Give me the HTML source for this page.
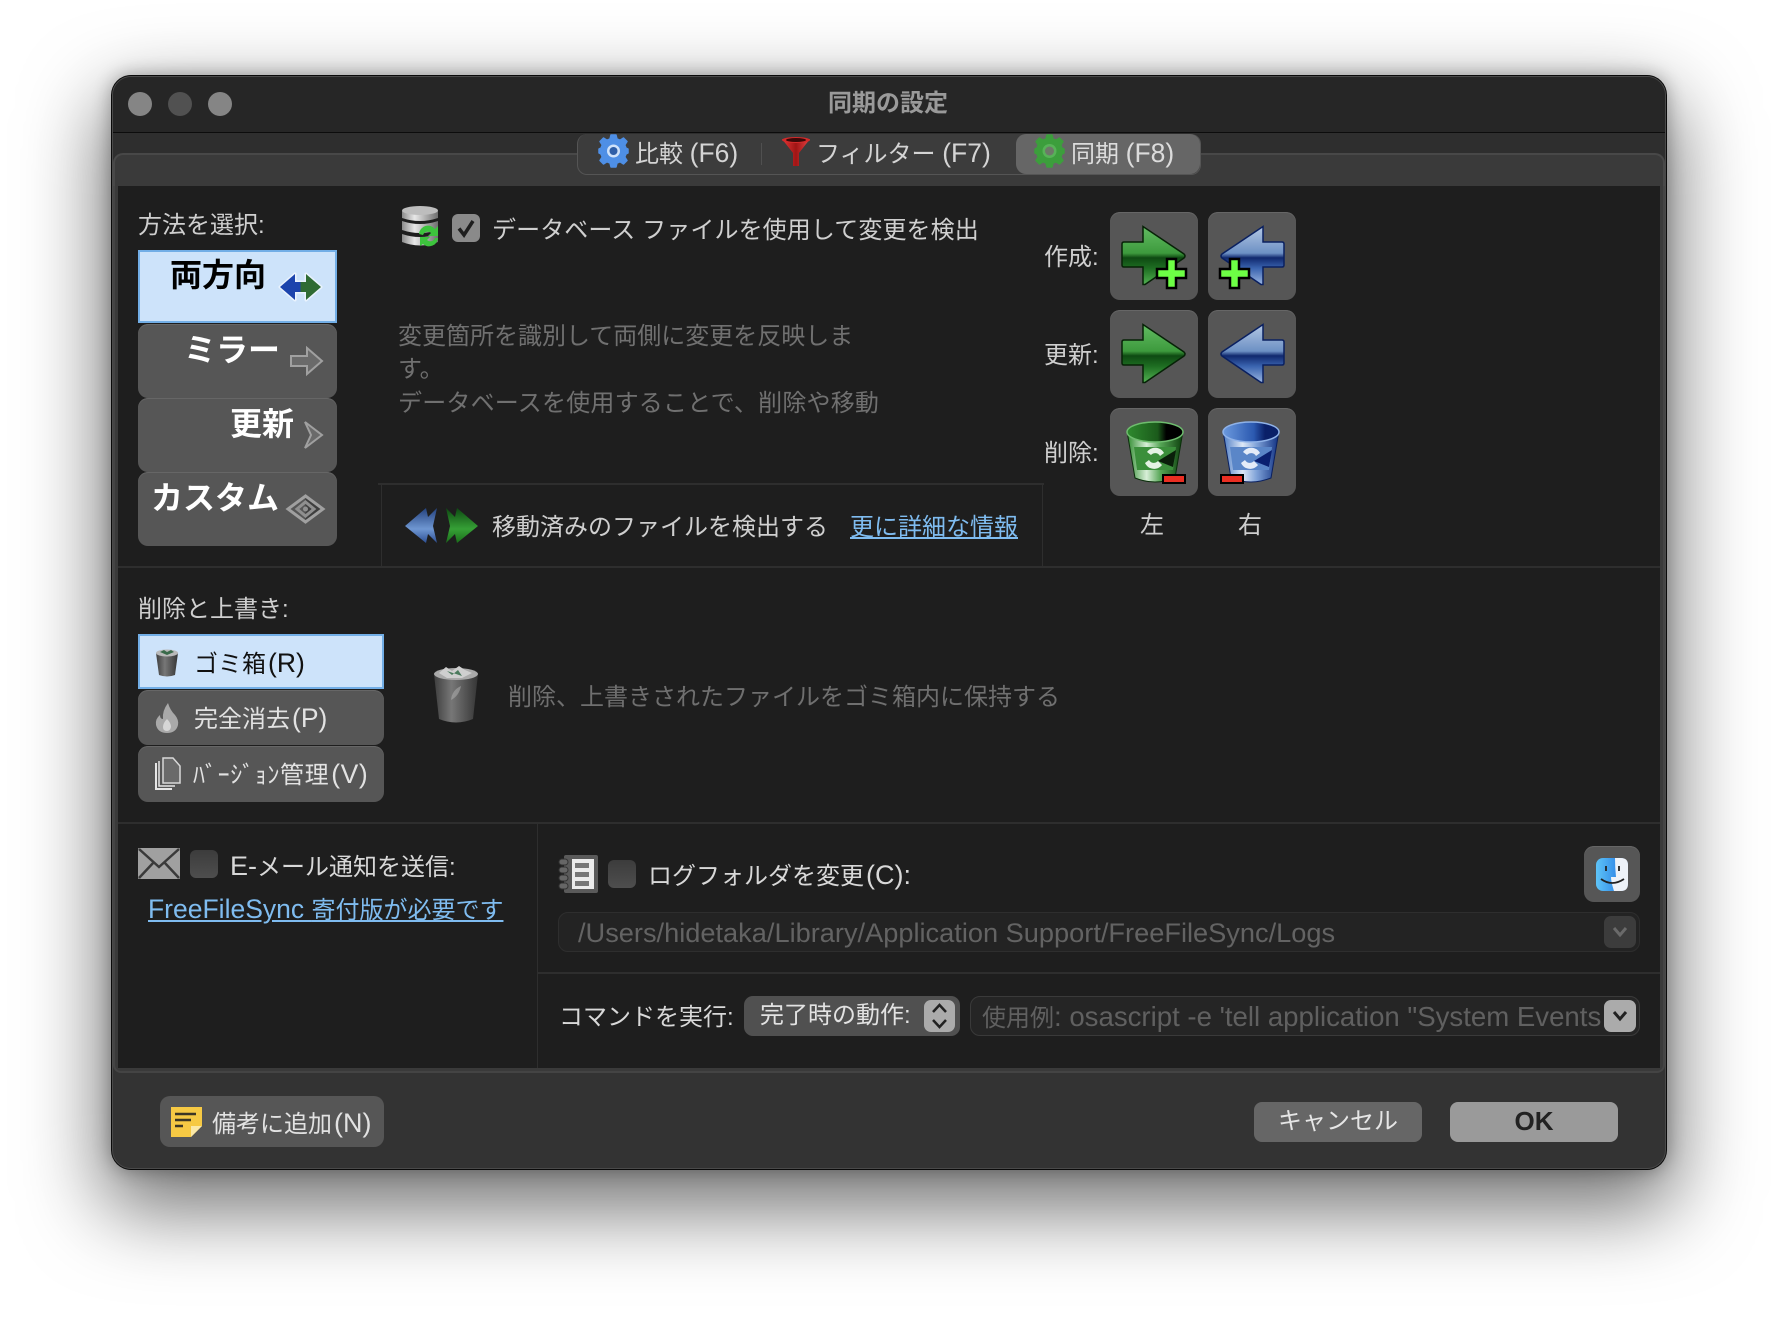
<!DOCTYPE html>
<html lang="ja">
<head>
<meta charset="utf-8">
<title>同期の設定</title>
<style>
html,body{margin:0;padding:0;width:1778px;height:1318px;overflow:hidden;background:#fff}
body{position:relative;font-family:"Liberation Sans","Noto Sans CJK JP",sans-serif;font-size:24px;color:#cfcfcf}
.a{position:absolute;box-sizing:border-box}
.t{position:absolute;white-space:nowrap;line-height:40px;height:40px}
.l{font-size:26.500px;margin-left:2px}
svg{position:absolute;overflow:visible}
.btn{position:absolute;box-sizing:border-box;background:#565656;border-radius:10px;box-shadow:inset 0 1px 0 #666}
.sel{position:absolute;box-sizing:border-box;background:#cde3fa;border:2px solid #72aee6}
.cb{position:absolute;width:28px;height:28px;border-radius:6px;background:linear-gradient(#3c3c3c,#4e4e4e)}
a{color:#7fbcf0;text-decoration:underline}
</style>
</head>
<body>
<svg width="0" height="0" style="position:absolute">
<defs>
<linearGradient id="gA" x1="0" y1="0" x2="0" y2="1"><stop offset="0" stop-color="#62bc62"/><stop offset=".46" stop-color="#3d9a3d"/><stop offset=".54" stop-color="#0e4a12"/><stop offset=".72" stop-color="#1e6e22"/><stop offset="1" stop-color="#52b052"/></linearGradient>
<linearGradient id="bA" x1="0" y1="0" x2="0" y2="1"><stop offset="0" stop-color="#b4c8e4"/><stop offset=".46" stop-color="#6c90c4"/><stop offset=".54" stop-color="#10286e"/><stop offset=".72" stop-color="#3a64b0"/><stop offset="1" stop-color="#9ab5e0"/></linearGradient>
<linearGradient id="gM" x1="0" y1="0" x2="0" y2="1"><stop offset="0" stop-color="#0e4a12"/><stop offset=".6" stop-color="#36a036"/><stop offset="1" stop-color="#1a6e1a"/></linearGradient>
<linearGradient id="bM" x1="0" y1="0" x2="0" y2="1"><stop offset="0" stop-color="#24427e"/><stop offset=".6" stop-color="#6f97d2"/><stop offset="1" stop-color="#2d4f94"/></linearGradient>
<linearGradient id="gT" x1="0" y1="0" x2="1" y2="0"><stop offset="0" stop-color="#2e8b2e"/><stop offset=".35" stop-color="#d8efd8"/><stop offset=".6" stop-color="#55a555"/><stop offset="1" stop-color="#0d3f0d"/></linearGradient>
<linearGradient id="bT" x1="0" y1="0" x2="1" y2="0"><stop offset="0" stop-color="#4d7cc4"/><stop offset=".35" stop-color="#dde8f7"/><stop offset=".6" stop-color="#7fa2d8"/><stop offset="1" stop-color="#0f2f80"/></linearGradient>
<linearGradient id="gTop" x1="0" y1="0" x2="1" y2="0"><stop offset="0" stop-color="#2e8a2e"/><stop offset=".55" stop-color="#1b5a1b"/><stop offset=".7" stop-color="#000"/></linearGradient>
<linearGradient id="bTop" x1="0" y1="0" x2="1" y2="0"><stop offset="0" stop-color="#6c9ade"/><stop offset=".55" stop-color="#2b59b0"/><stop offset=".75" stop-color="#0a2068"/></linearGradient>
<linearGradient id="metal" x1="0" y1="0" x2="1" y2="0"><stop offset="0" stop-color="#8b8b8b"/><stop offset=".35" stop-color="#e8e8e8"/><stop offset="1" stop-color="#6e6e6e"/></linearGradient>
<linearGradient id="gray" x1="0" y1="0" x2="1" y2="0"><stop offset="0" stop-color="#3e3e3e"/><stop offset=".4" stop-color="#777"/><stop offset="1" stop-color="#353535"/></linearGradient>
<linearGradient id="fin" x1="0" y1="0" x2="1" y2="0"><stop offset="0" stop-color="#5ec4f8"/><stop offset="1" stop-color="#1d6fe0"/></linearGradient>
<linearGradient id="fun" x1="0" y1="0" x2="1" y2="0"><stop offset="0" stop-color="#e23636"/><stop offset=".5" stop-color="#a01515"/><stop offset="1" stop-color="#e84444"/></linearGradient>
<g id="rarrow"><path d="M2 16H21V0.500L62 28Q64 30 62 32L23 58.500H21V41H2Q0 41 0 39V18Q0 16 2 16Z" fill="url(#gA)" stroke="#072207" stroke-width="1.500"/></g>
<g id="larrow"><path d="M62 16H43V0.500L2 28Q0 30 2 32L41 58.500H43V41H62Q64 41 64 39V18Q64 16 62 16Z" fill="url(#bA)" stroke="#0a2060" stroke-width="1.500"/></g>
<g id="plus"><path d="M10 0H19V10H29V19H19V29H10V19H0V10H10Z" fill="#6dff45" stroke="#000" stroke-width="2.500"/></g>
<g id="gear"><path d="M12 0H17L18 4 21 5.200 24.500 3 28 6.500 25.800 10 27 13 29 14V18L27 19 25.800 22 28 25.500 24.500 29 21 26.800 18 28 17 32H12L11 28 8 26.800 4.500 29 1 25.500 3.200 22 2 19 0 18V14L2 13 3.200 10 1 6.500 4.500 3 8 5.200 11 4Z" stroke-width="1.500" stroke-linejoin="round"/></g>
</defs>
</svg>

<!-- window -->
<div class="a" style="left:111px;top:75px;width:1556px;height:1095px;border-radius:20px;background:#0a0a0a;box-shadow:0 0 18px rgba(0,0,0,.3),0 32px 80px 8px rgba(0,0,0,.55)"></div>
<div class="a" style="left:112px;top:76px;width:1554px;height:1093px;border-radius:19px;border:1px solid #4a4a4a;overflow:hidden;background:#333">
  <div class="a" style="left:0;top:0;width:1554px;height:56px;background:#262626;border-bottom:1px solid #0c0c0c"></div>
  <div class="a" style="left:0;top:56px;width:1554px;height:40px;background:#2e2e2e"></div>
</div>

<!-- traffic lights -->
<div class="a" style="left:128px;top:92px;width:24px;height:24px;border-radius:50%;background:#858585"></div>
<div class="a" style="left:168px;top:92px;width:24px;height:24px;border-radius:50%;background:#515151"></div>
<div class="a" style="left:208px;top:92px;width:24px;height:24px;border-radius:50%;background:#858585"></div>
<div class="t" style="left:768px;top:84px;width:240px;text-align:center;color:#9a9a9a;font-weight:bold;font-size:24px">同期の設定</div>

<!-- notebook -->
<div class="a" style="left:113px;top:153px;width:1552px;height:40px;background:#3a3a3a;border:2px solid #484848;border-bottom:0;border-radius:10px 10px 0 0"></div>
<div class="a" style="left:113px;top:186px;width:1552px;height:887px;background:#3a3a3a;border-radius:0 0 8px 8px;border:2px solid #444;border-top:0"></div>
<div class="a" style="left:118px;top:186px;width:1542px;height:882px;background:#1e1e1e"></div>

<!-- segmented tabs -->
<div class="a" style="left:577px;top:134px;width:624px;height:41px;background:#3c3c3c;border:1px solid #555;border-top:0;border-radius:10px"></div>
<div class="a" style="left:1016px;top:134px;width:184px;height:40px;background:#666;border-radius:10px"></div>
<div class="a" style="left:761px;top:143px;width:1px;height:22px;background:#505050"></div>
<svg style="left:599px;top:135px" width="29" height="32" viewBox="0 0 29 32"><use href="#gear" fill="#4e8fe6" stroke="#4e8fe6"/><circle cx="14.500" cy="16" r="6.500" fill="#cfe2fa"/><circle cx="14.500" cy="16" r="4" fill="#2f5fa8"/></svg>
<div class="t" style="left:635px;top:133px;font-size:24px;color:#d4d4d4">比較 <span style="font-size:26.500px">(F6)</span></div>
<svg style="left:782px;top:137px" width="28" height="30" viewBox="0 0 28 30"><path d="M0 2H28L17 16V29H11V16Z" fill="url(#fun)"/><ellipse cx="14" cy="3" rx="14" ry="3" fill="#d42a2a"/><ellipse cx="14" cy="3" rx="10" ry="2" fill="#3a0808"/></svg>
<div class="t" style="left:816px;top:133px;font-size:24px;color:#d4d4d4">フィルター <span style="font-size:26.500px">(F7)</span></div>
<svg style="left:1035px;top:135px" width="29" height="32" viewBox="0 0 29 32"><use href="#gear" fill="#3c9e3c" stroke="#3c9e3c"/><circle cx="14.500" cy="16" r="7" fill="#57b257"/><circle cx="14.500" cy="16" r="4.500" fill="#6d7868"/></svg>
<div class="t" style="left:1071px;top:133px;font-size:24px;color:#dcdcdc">同期 <span style="font-size:26.500px">(F8)</span></div>

<!-- method -->
<div class="t" style="left:138px;top:206px">方法を選択:</div>
<div class="sel" style="left:138px;top:250px;width:199px;height:73px"></div>
<div class="btn" style="left:138px;top:324px;width:199px;height:74px"></div>
<div class="btn" style="left:138px;top:398px;width:199px;height:74px"></div>
<div class="btn" style="left:138px;top:472px;width:199px;height:74px"></div>
<div class="t" style="left:170px;top:255px;font-size:32px;font-weight:bold;color:#000">両方向</div>
<div class="t" style="left:184px;top:330px;font-size:32px;font-weight:bold;color:#fff">ミラー</div>
<div class="t" style="left:230px;top:404px;font-size:32px;font-weight:bold;color:#fff">更新</div>
<div class="t" style="left:151px;top:478px;font-size:32px;font-weight:bold;color:#fff">カスタム</div>
<svg style="left:279px;top:273px" width="43" height="28" viewBox="0 0 43 28"><path d="M1 14L16 1V9H27V1L42 14 27 27V19H16V27Z" fill="#eaf3fd" stroke="#eaf3fd" stroke-width="3" stroke-linejoin="round"/><path d="M1 14L16 1V9H21.500V19H16V27Z" fill="#1c44ad"/><path d="M42 14L27 1V9H21.500V19H27V27Z" fill="#2f6b33"/></svg>
<svg style="left:290px;top:347px" width="33" height="28" viewBox="0 0 33 28"><path d="M1 9H17V1L32 14 17 27V19H1Z" fill="#6a6a6a" stroke="#a0a0a0" stroke-width="2"/></svg>
<svg style="left:304px;top:421px" width="19" height="28" viewBox="0 0 19 28"><path d="M1 1L18 14 1 27 7 14Z" fill="#6a6a6a" stroke="#a0a0a0" stroke-width="2"/></svg>
<svg style="left:287px;top:495px" width="37" height="28" viewBox="0 0 37 28"><path d="M18.500 1L36 14 18.500 27Z" fill="#3e3e3e"/><path d="M18.500 1L36 14 18.500 27 1 14Z" fill="none" stroke="#a0a0a0" stroke-width="3"/><path d="M18.500 7L27 14 18.500 21 10 14Z" fill="none" stroke="#8f8f8f" stroke-width="3"/><circle cx="18.500" cy="14" r="2.500" fill="#8f8f8f"/></svg>

<!-- db row -->
<svg style="left:402px;top:206px" width="37" height="41" viewBox="0 0 37 41">
  <path d="M0 5V12Q18 18 36 12V5Z" fill="url(#metal)"/><ellipse cx="18" cy="4.500" rx="18" ry="4.500" fill="#bdbdbd"/>
  <path d="M0 15V24Q18 30 36 24V15Q18 21 0 15Z" fill="url(#metal)"/>
  <path d="M0 28V36Q18 43 36 36V28Q18 34 0 28Z" fill="url(#metal)"/>
  <path d="M17 28a9 9 0 0 1 16-5l3-3v10h-10l3-3a5 5 0 0 0-8 2z" fill="#3dc43d"/><path d="M36 32a9 9 0 0 1-15 6l-3 2v-9h10l-3 3a5 5 0 0 0 8-2z" fill="#3dc43d"/>
</svg>
<div class="a" style="left:452px;top:214px;width:28px;height:28px;border-radius:6px;background:#8a8a8a"></div>
<svg style="left:452px;top:214px" width="28" height="28" viewBox="0 0 28 28"><path d="M7 14.500L12 21 21 7" fill="none" stroke="#1e1e1e" stroke-width="3.500"/></svg>
<div class="t" style="left:492px;top:211px;letter-spacing:.1px">データベース ファイルを使用して変更を検出</div>

<div class="t" style="left:398px;top:317px;color:#707070">変更箇所を識別して両側に変更を反映しま</div>
<div class="t" style="left:398px;top:350px;color:#707070">す。</div>
<div class="t" style="left:398px;top:384px;color:#707070;letter-spacing:.2px">データベースを使用することで、削除や移動</div>

<!-- detect moved box -->
<div class="a" style="left:378px;top:483px;width:666px;height:2px;background:#2e2e2e"></div>
<div class="a" style="left:381px;top:485px;width:1px;height:82px;background:#2e2e2e"></div>
<div class="a" style="left:1042px;top:485px;width:1px;height:82px;background:#2e2e2e"></div>
<svg style="left:405px;top:508px" width="74" height="35" viewBox="0 0 74 35">
  <path d="M0 18L21 0 23 9 32 0 28 18 32 35 23 26 21 35Z" fill="url(#bM)"/>
  <path d="M73 18L52 0 50 9 41 0 45 18 41 35 50 26 52 35Z" fill="url(#gM)"/>
</svg>
<div class="t" style="left:492px;top:508px">移動済みのファイルを検出する</div>
<div class="t" style="left:850px;top:508px"><a>更に詳細な情報</a></div>

<!-- direction grid -->
<div class="t" style="left:1044px;top:238px">作成:</div>
<div class="t" style="left:1044px;top:336px">更新:</div>
<div class="t" style="left:1044px;top:434px">削除:</div>
<div class="btn" style="left:1110px;top:212px;width:88px;height:88px"></div>
<div class="btn" style="left:1208px;top:212px;width:88px;height:88px"></div>
<div class="btn" style="left:1110px;top:310px;width:88px;height:88px"></div>
<div class="btn" style="left:1208px;top:310px;width:88px;height:88px"></div>
<div class="btn" style="left:1110px;top:408px;width:88px;height:88px"></div>
<div class="btn" style="left:1208px;top:408px;width:88px;height:88px"></div>
<svg style="left:1122px;top:226px" width="64" height="60" viewBox="0 0 64 60"><use href="#rarrow"/></svg>
<svg style="left:1220px;top:226px" width="64" height="60" viewBox="0 0 64 60"><use href="#larrow"/></svg>
<svg style="left:1157px;top:259px" width="29" height="29" viewBox="0 0 29 29"><use href="#plus"/></svg>
<svg style="left:1220px;top:259px" width="29" height="29" viewBox="0 0 29 29"><use href="#plus"/></svg>
<svg style="left:1122px;top:324px" width="64" height="60" viewBox="0 0 64 60"><use href="#rarrow"/></svg>
<svg style="left:1220px;top:324px" width="64" height="60" viewBox="0 0 64 60"><use href="#larrow"/></svg>
<svg style="left:1126px;top:421px" width="58" height="62" viewBox="0 0 58 62">
  <path d="M1 10L9 57Q29 65 49 57L57 10Z" fill="url(#gT)" stroke="#0a2e0a"/>
  <path d="M8 26L11 49H47L50 26Z" fill="#3b8f3b"/><path d="M32 40L50 29 47 46Z" fill="#0a1f0a"/>
  <path d="M21 31a10 10 0 0 1 17 1l-4 3a5.500 5.500 0 0 0-9-1zM36 44a10 10 0 0 1-17-2l4-3a5.500 5.500 0 0 0 9 1z" fill="#e4f2e4"/>
  <ellipse cx="29" cy="11" rx="28" ry="10" fill="url(#gTop)" stroke="#6ebd6e" stroke-width="1.500"/>
</svg>
<svg style="left:1222px;top:421px" width="58" height="62" viewBox="0 0 58 62">
  <path d="M1 10L9 57Q29 65 49 57L57 10Z" fill="url(#bT)" stroke="#0a2060"/>
  <path d="M8 26L11 49H47L50 26Z" fill="#5a86c8"/><path d="M32 40L50 29 47 46Z" fill="#0a2070"/>
  <path d="M21 31a10 10 0 0 1 17 1l-4 3a5.500 5.500 0 0 0-9-1zM36 44a10 10 0 0 1-17-2l4-3a5.500 5.500 0 0 0 9 1z" fill="#e4ecf8"/>
  <ellipse cx="29" cy="11" rx="28" ry="10" fill="url(#bTop)" stroke="#8fb2e8" stroke-width="1.500"/>
</svg>
<div class="a" style="left:1162px;top:474px;width:24px;height:10px;background:#ea2e22;border:2px solid #000"></div>
<div class="a" style="left:1220px;top:474px;width:24px;height:10px;background:#ea2e22;border:2px solid #000"></div>
<div class="t" style="left:1140px;top:506px">左</div>
<div class="t" style="left:1238px;top:506px">右</div>

<div class="a" style="left:118px;top:566px;width:1542px;height:2px;background:#2e2e2e"></div>

<!-- delete section -->
<div class="t" style="left:138px;top:590px">削除と上書き:</div>
<div class="sel" style="left:138px;top:634px;width:246px;height:55px"></div>
<div class="btn" style="left:138px;top:690px;width:246px;height:55px"></div>
<div class="btn" style="left:138px;top:746px;width:246px;height:56px"></div>
<svg style="left:155px;top:649px" width="24" height="28" viewBox="0 0 24 28"><path d="M1 4L4 26Q12 29 20 26L23 4Z" fill="url(#gray)"/><ellipse cx="12" cy="4" rx="11" ry="3.500" fill="#b9b9b9"/><path d="M5 3l4-2 3 2 4-2 3 2-7 3z" fill="#3a6a4a"/></svg>
<div class="t" style="left:194px;top:643px;color:#111">ゴミ箱<span class="l">(R)</span></div>
<svg style="left:155px;top:703px" width="24" height="30" viewBox="0 0 24 30"><path d="M13 0Q15 7 20 12Q24 17 23 22Q21 30 12 30Q3 30 1 22Q0 16 5 12Q5 16 8 16Q7 8 13 0Z" fill="#a9a9a9"/><path d="M12 16Q16 20 16 24Q15 28 12 28Q8 28 8 24Q8 20 12 16Z" fill="#d6d6d6"/></svg>
<div class="t" style="left:194px;top:698px;color:#e2e2e2">完全消去<span class="l">(P)</span></div>
<svg style="left:155px;top:758px" width="26" height="32" viewBox="0 0 26 32"><path d="M1 5V31H17" fill="none" stroke="#e6e6e6" stroke-width="2"/><path d="M4 3V28H20" fill="none" stroke="#e6e6e6" stroke-width="1.500"/><path d="M8 0H18L25 8V25H8Z" fill="#6a6a6a" stroke="#d8d8d8" stroke-width="1.500"/></svg>
<div class="t" style="left:193px;top:754px;color:#e2e2e2;letter-spacing:.6px">ﾊﾞｰｼﾞｮﾝ管理<span class="l">(V)</span></div>
<svg style="left:433px;top:666px" width="46" height="58" viewBox="0 0 46 58"><path d="M1 8L6 53Q23 60 40 53L45 8Z" fill="url(#gray)"/><ellipse cx="23" cy="8" rx="22" ry="6" fill="#aaa"/><path d="M6 7l7-6 6 4 7-5 6 4 7 3-10 5H14z" fill="#cfcfcf"/><path d="M14 5l5 4 6-5 4 6z" fill="#4a7a5c"/><path d="M28 20Q19 24 18 34Q26 30 28 20Z" fill="#aaa" opacity=".6"/></svg>
<div class="t" style="left:508px;top:678px;color:#6f6f6f">削除、上書きされたファイルをゴミ箱内に保持する</div>

<div class="a" style="left:118px;top:822px;width:1542px;height:2px;background:#2e2e2e"></div>
<div class="a" style="left:537px;top:824px;width:1px;height:244px;background:#2e2e2e"></div>
<div class="a" style="left:538px;top:972px;width:1122px;height:2px;background:#2e2e2e"></div>

<!-- email -->
<svg style="left:138px;top:848px" width="42" height="31" viewBox="0 0 42 31"><rect width="42" height="31" rx="1" fill="#a0a0a0"/><path d="M1 1L21 19 41 1M1 30L16 14M41 30L26 14" fill="none" stroke="#3a3a3a" stroke-width="2.500"/></svg>
<div class="cb" style="left:190px;top:850px"></div>
<div class="t" style="left:230px;top:846px;color:#d8d8d8"><span style="font-size:27px">E-</span>メール通知を送信:</div>
<div class="t" style="left:148px;top:889px"><a><span style="font-size:26.500px">FreeFileSync </span>寄付版が必要です</a></div>

<!-- log folder -->
<svg style="left:559px;top:855px" width="39" height="38" viewBox="0 0 39 38"><rect x="5" y="0" width="34" height="38" rx="2" fill="#5a5a5a"/><rect x="13" y="4" width="22" height="30" fill="#ececec"/><path d="M16 8H30V13H16ZM16 17H30V22H16ZM16 26H30V31H16Z" fill="#777"/><g fill="#666" stroke="#333"><rect x="0" y="4" width="9" height="6" rx="3"/><rect x="0" y="12" width="9" height="6" rx="3"/><rect x="0" y="20" width="9" height="6" rx="3"/><rect x="0" y="28" width="9" height="6" rx="3"/></g></svg>
<div class="cb" style="left:608px;top:860px"></div>
<div class="t" style="left:648px;top:855px;color:#d8d8d8">ログフォルダを変更<span class="l" style="font-size:27px">(C):</span></div>
<div class="btn" style="left:1584px;top:846px;width:56px;height:56px"></div>
<svg style="left:1596px;top:858px" width="32" height="33" viewBox="0 0 32 33"><rect width="32" height="33" rx="7" fill="url(#fin)"/><path d="M19 0H25Q32 0 32 7V26Q32 33 25 33H18Q15 24 15 19H20Q19 9 19 0Z" fill="#eef2f8"/><path d="M10 8V13M23 8V13" stroke="#222" stroke-width="1.800"/><path d="M5 21Q16 29 28 21" fill="none" stroke="#222" stroke-width="1.800"/></svg>
<div class="a" style="left:558px;top:912px;width:1082px;height:40px;background:#232323;border:1px solid #2e2e2e;border-radius:10px"></div>
<div class="t" style="left:578px;top:913px;font-size:27.200px;color:#636363">/Users/hidetaka/Library/Application Support/FreeFileSync/Logs</div>
<div class="a" style="left:1604px;top:916px;width:32px;height:32px;background:#3c3c3c;border-radius:7px"></div>
<svg style="left:1604px;top:916px" width="32" height="32" viewBox="0 0 32 32"><path d="M10 12L16 19 22 12" fill="none" stroke="#6a6a6a" stroke-width="3"/></svg>

<!-- command -->
<div class="t" style="left:559px;top:998px;color:#d8d8d8">コマンドを実行:</div>
<div class="a" style="left:744px;top:996px;width:216px;height:40px;background:#505050;border-radius:9px"></div>
<div class="t" style="left:760px;top:996px;color:#e2e2e2">完了時の動作:</div>
<div class="a" style="left:924px;top:1000px;width:31px;height:32px;background:#ababab;border-radius:7px"></div>
<svg style="left:924px;top:1000px" width="31" height="32" viewBox="0 0 31 32"><path d="M9 12L15.500 5 22 12M9 20L15.500 27 22 20" fill="none" stroke="#222" stroke-width="2.500"/></svg>
<div class="a" style="left:970px;top:996px;width:670px;height:40px;background:#252525;border:1px solid #3a3a3a;border-radius:10px"></div>
<div class="a" style="left:982px;top:997px;width:620px;height:40px;overflow:hidden"><div class="t" style="left:0;top:0;color:#606060">使用例<span style="font-size:27.600px">: osascript -e 'tell application "System Events"</span></div></div>
<div class="a" style="left:1604px;top:1000px;width:32px;height:32px;background:#ababab;border-radius:7px"></div>
<svg style="left:1604px;top:1000px" width="32" height="32" viewBox="0 0 32 32"><path d="M10 12L16 19 22 12" fill="none" stroke="#222" stroke-width="3"/></svg>

<!-- footer -->
<div class="a" style="left:160px;top:1096px;width:224px;height:51px;background:#565656;border-radius:10px"></div>
<svg style="left:171px;top:1107px" width="31" height="30" viewBox="0 0 31 30"><path d="M0 0H31V19L20 30H0Z" fill="#f6c944"/><path d="M20 30V19H31Z" fill="#fbe9a8"/><path d="M4 7H25M4 13H20M4 19H12" stroke="#3b3525" stroke-width="2.500"/></svg>
<div class="t" style="left:212px;top:1103px;color:#e2e2e2">備考に追加<span class="l" style="font-size:27px">(N)</span></div>
<div class="a" style="left:1254px;top:1102px;width:168px;height:40px;background:#666;border-radius:8px"></div>
<div class="t" style="left:1254px;top:1102px;width:168px;text-align:center;color:#e6e6e6">キャンセル</div>
<div class="a" style="left:1450px;top:1102px;width:168px;height:40px;background:#9a9a9a;border-radius:8px"></div>
<div class="t" style="left:1450px;top:1101px;width:168px;text-align:center;color:#222;font-weight:bold;font-size:26px">OK</div>
</body>
</html>
